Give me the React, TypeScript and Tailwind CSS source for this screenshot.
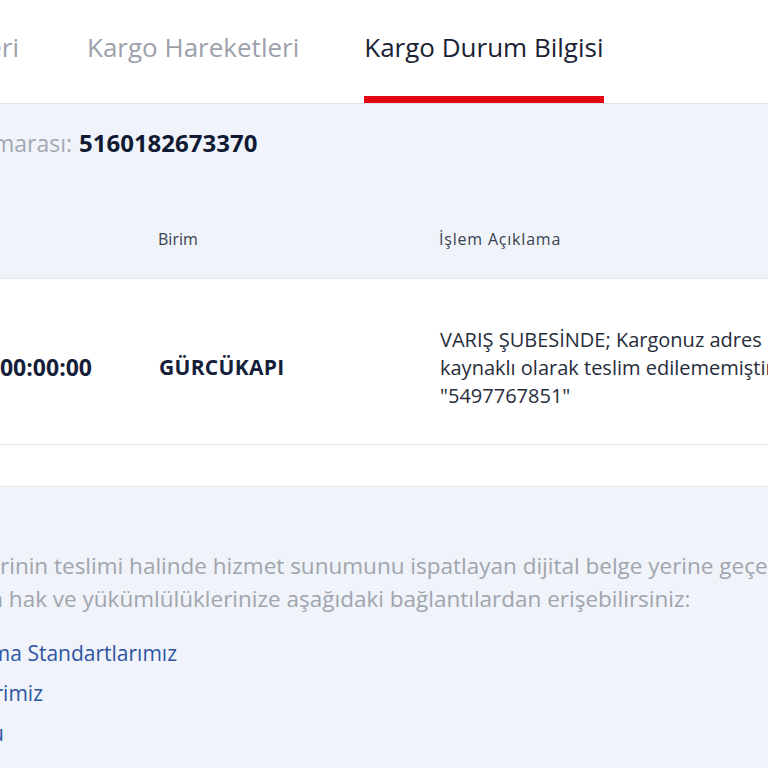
import React from "react";

export default function App() {
  return (
    <div className="w-[768px] h-[768px] overflow-hidden bg-white font-['Open_Sans',sans-serif]">
      {/* Tabs */}
      <div className="h-[104px] border-b border-[#e2e5ea] flex items-end">
        <div className="w-[19px] shrink-0 flex justify-end">
          <div className="whitespace-nowrap text-[26px] text-[#9ca1ab] font-medium pb-[29px] border-b-[7px] border-transparent">
            Gönderi Bilgileri
          </div>
        </div>
        <div className="ml-[68px] whitespace-nowrap text-[26px] text-[#9ca1ab] font-medium pb-[29px] border-b-[7px] border-transparent">
          Kargo Hareketleri
        </div>
        <div className="ml-[65px] whitespace-nowrap text-[26px] text-[#1b2233] font-medium pb-[29px] border-b-[7px] border-[#e30613]">
          Kargo Durum Bilgisi
        </div>
      </div>

      {/* Number + table header */}
      <div className="bg-[#f0f3f9]">
        <div className="h-[78px] flex items-center">
          <div className="w-[72px] shrink-0 flex justify-end">
            <span className="whitespace-nowrap text-[23px] text-[#a3a8b2]">Kargo Takip Numarası:</span>
          </div>
          <span className="ml-[7px] whitespace-nowrap text-[24px] font-bold text-[#0f1b33]">5160182673370</span>
        </div>
        <div className="h-[97px] border-b border-[#e2e5ea] flex items-center pt-[18px]">
          <div className="w-[158px] shrink-0" />
          <div className="w-[281px] shrink-0 text-[16px] text-[#3a4150]">Birim</div>
          <div className="whitespace-nowrap text-[16px] tracking-[0.8px] text-[#3a4150]">İşlem Açıklama</div>
        </div>
      </div>

      {/* Data row */}
      <div className="h-[166px] border-b border-[#e2e5ea] flex items-center pt-[12px]">
        <div className="w-[92px] shrink-0 flex justify-end">
          <span className="whitespace-nowrap text-[23px] font-bold text-[#14203a]">15.03.2024 00:00:00</span>
        </div>
        <div className="ml-[67px] w-[281px] shrink-0 text-[21px] font-bold text-[#14203a] tracking-[0.3px]">
          GÜRCÜKAPI
        </div>
        <div className="text-[20px] leading-[28px] text-[#262d3b] whitespace-nowrap">
          <div>VARIŞ ŞUBESİNDE; Kargonuz adres bilgisi yetersizliği</div>
          <div>kaynaklı olarak teslim edilememiştir. Alıcı telefon:</div>
          <div>"5497767851"</div>
        </div>
      </div>

      {/* Spacer */}
      <div className="h-[42px] border-b border-[#e2e5ea]" />

      {/* Info section */}
      <div className="bg-[#f0f3f9] pt-[62px] h-[300px]">
        <div className="text-[22.5px] leading-[33px] text-[#a0a5ae] whitespace-nowrap">
          <div className="flex">
            <div className="w-0 shrink-0 flex justify-end">
              <span>Gönderile</span>
            </div>
            <span>rinin teslimi halinde hizmet sunumunu ispatlayan dijital belge yerine geçen</span>
          </div>
          <div className="flex">
            <div className="w-[3px] shrink-0 flex justify-end">
              <span>Gönderinize ilişkin</span>
            </div>
            <span>&nbsp;hak ve yükümlülüklerinize aşağıdaki bağlantılardan erişebilirsiniz:</span>
          </div>
        </div>
        <div className="mt-[26px] flex flex-col gap-[16px] text-[21px] leading-[24px] text-[#2f55a4] whitespace-nowrap">
          <div className="w-[177px] flex justify-end">
            <span>Hizmet Kalitesi ve Taşıma Standartlarımız</span>
          </div>
          <div className="w-[43px] flex justify-end">
            <span>Taahhütlerimiz</span>
          </div>
          <div className="w-[4px] flex justify-end">
            <span>Şikayet Başvurusu</span>
          </div>
        </div>
      </div>
    </div>
  );
}
